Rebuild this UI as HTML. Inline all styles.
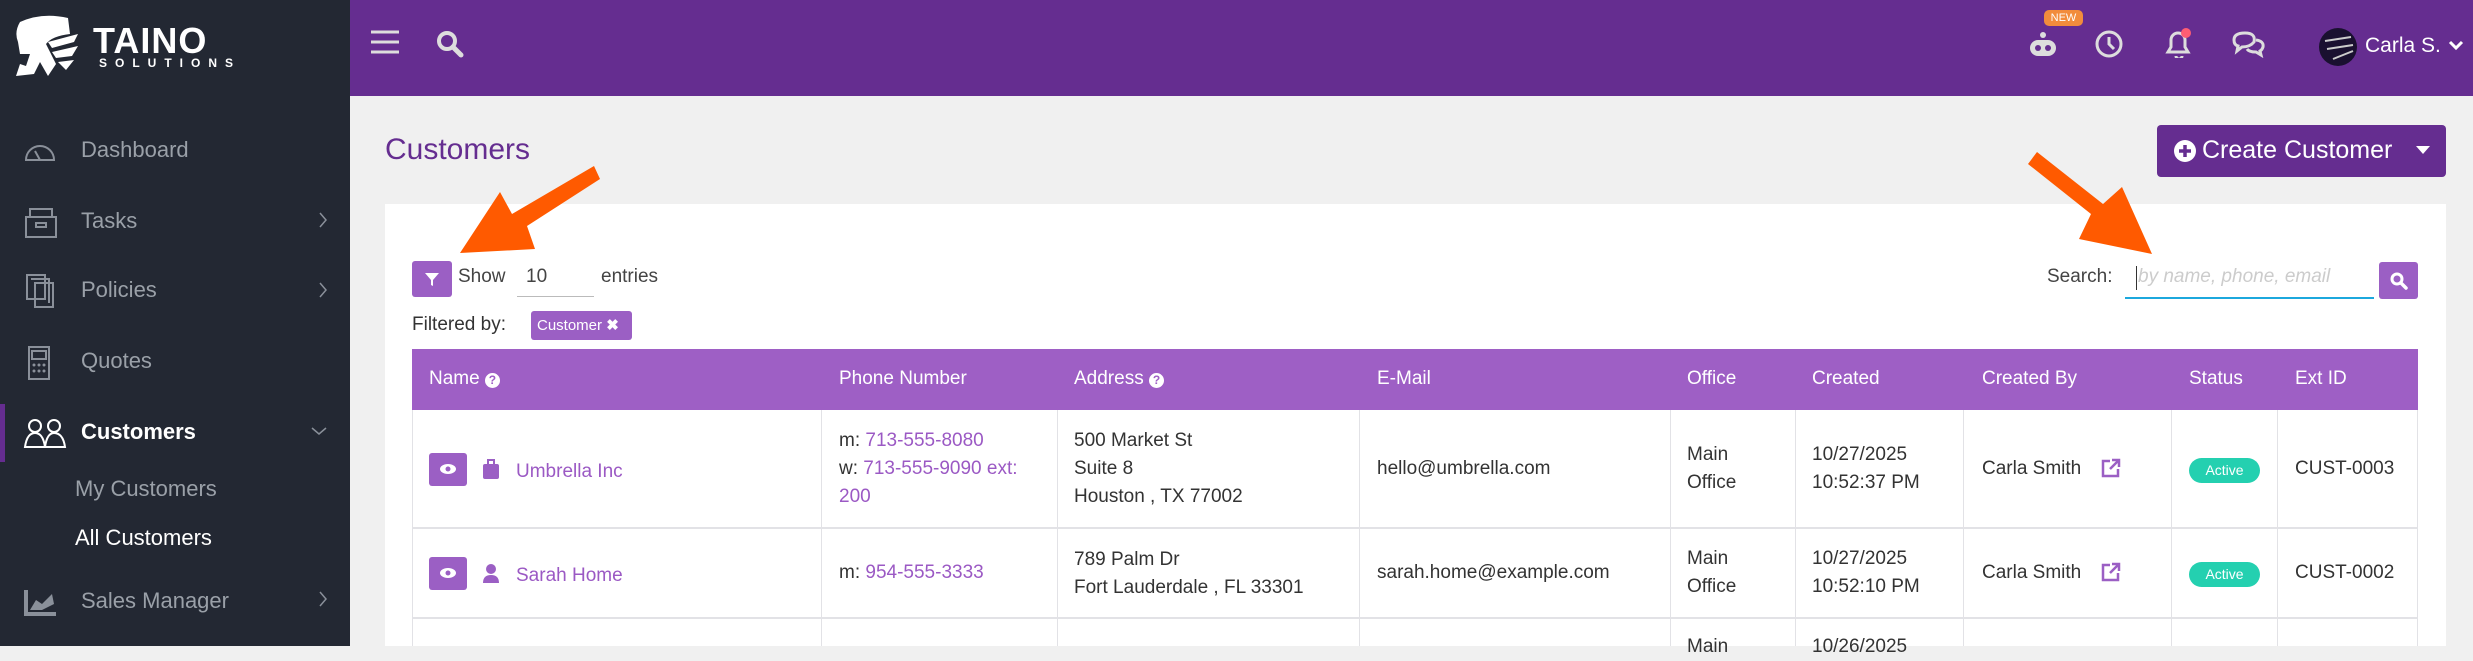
<!DOCTYPE html>
<html><head><meta charset="utf-8"><style>
*{margin:0;padding:0;box-sizing:border-box}
body{width:2473px;height:646px;overflow:hidden;background:#f0f0f0;font-family:"Liberation Sans",sans-serif;position:relative;color:#333}
.a{position:absolute;white-space:nowrap}
#sb{left:0;top:0;width:350px;height:646px;background:#232833}
#tb{left:350px;top:0;width:2123px;height:96px;background:#652d90}
.nav{font-size:22px;color:#9aa0a8;transform:translateY(-50%)}
.ico{stroke:#8a909a;fill:none;stroke-width:2}
.th{color:#fff;font-size:19px;top:379px;transform:translateY(-50%)}
.td{font-size:19px;color:#333;transform:translateY(-50%);line-height:28px}
.lk{color:#9b59c4}
.vl{position:absolute;width:1px;background:#e2e2e6;top:410px;height:236px}
.hl{position:absolute;height:2px;background:#e2e2e6;left:412px;width:2006px}
.vb{position:absolute;width:38px;height:33px;background:#9b5fc4;border-radius:3px}
.act{position:absolute;width:71px;height:25px;border-radius:13px;background:#24d0b0;color:#fff;font-size:14px;text-align:center;line-height:25px}
</style></head><body>
<div class="a" id="sb"></div>
<div class="a" id="tb"></div>
<svg class="a" style="left:12px;top:14px" width="72" height="66" viewBox="0 0 72 66"><path d="M8 8 Q30 -2 56 4 L58 20 Q40 22 34 30 L44 50 L36 62 L28 48 L22 60 L4 62 L8 50 L14 52 L18 40 L8 40 L6 28 Q2 18 8 8Z" fill="#fff"/><path d="M36 28 L66 20 L62 28 L40 34Z M40 38 L66 32 L60 42 L44 44Z M46 48 L62 46 L54 56Z" fill="#fff"/></svg>
<div class="a" style="left:93px;top:20px;font-size:36px;font-weight:bold;color:#fff;letter-spacing:1px">TAINO</div>
<div class="a" style="left:99px;top:56px;font-size:12px;font-weight:bold;color:#fff;letter-spacing:8px">SOLUTIONS</div>
<svg class="a" style="left:24px;top:140px" width="32" height="22"><path class="ico" d="M2 20 A14 14 0 0 1 30 20Z M16 20 L11 11"/></svg>
<div class="a nav" style="left:81px;top:150px">Dashboard</div>
<svg class="a" style="left:24px;top:205px" width="34" height="34"><path class="ico" d="M2 12 L32 12 L32 32 L2 32Z M6 12 L6 4 L28 4 L28 12 M12 18 L22 18 L22 22 L12 22Z"/></svg>
<div class="a nav" style="left:81px;top:221px">Tasks</div>
<svg class="a" style="left:318px;top:211px" width="10" height="18"><path d="M2 2 L8 9 L2 16" stroke="#8a909a" stroke-width="1.5" fill="none"/></svg>
<svg class="a" style="left:25px;top:273px" width="32" height="36"><path class="ico" d="M2 2 L20 2 L20 26 L2 26Z M6 6 L24 6 L24 30 M10 10 L28 10 L28 34 L10 34Z"/></svg>
<div class="a nav" style="left:81px;top:290px">Policies</div>
<svg class="a" style="left:318px;top:281px" width="10" height="18"><path d="M2 2 L8 9 L2 16" stroke="#8a909a" stroke-width="1.5" fill="none"/></svg>
<svg class="a" style="left:26px;top:345px" width="26" height="36"><path class="ico" d="M3 2 L23 2 L23 34 L3 34Z M6 6 L20 6 L20 14 L6 14Z"/><g fill="#8a909a"><circle cx="8" cy="20" r="1.5"/><circle cx="13" cy="20" r="1.5"/><circle cx="18" cy="20" r="1.5"/><circle cx="8" cy="26" r="1.5"/><circle cx="13" cy="26" r="1.5"/><circle cx="18" cy="26" r="1.5"/></g></svg>
<div class="a nav" style="left:81px;top:361px">Quotes</div>
<div class="a" style="left:0;top:404px;width:5px;height:58px;background:#652d90"></div>
<svg class="a" style="left:23px;top:417px" width="44" height="32"><g stroke="#fff" fill="none" stroke-width="2"><circle cx="12" cy="9" r="6"/><circle cx="31" cy="9" r="6"/><path d="M2 30 Q4 16 12 16 Q20 16 22 30Z M22 30 Q24 16 31 16 Q40 16 42 30Z"/></g></svg>
<div class="a nav" style="left:81px;top:432px;color:#fff;font-weight:bold">Customers</div>
<svg class="a" style="left:310px;top:426px" width="18" height="10"><path d="M2 2 L9 8 L16 2" stroke="#8a909a" stroke-width="1.5" fill="none"/></svg>
<div class="a nav" style="left:75px;top:489px">My Customers</div>
<div class="a nav" style="left:75px;top:538px;color:#fff">All Customers</div>
<svg class="a" style="left:24px;top:590px" width="34" height="26"><path d="M2 0 L2 24 L32 24" stroke="#8a909a" stroke-width="4" fill="none"/><path d="M6 20 L12 10 L18 14 L28 4 L30 14 L18 20 Z" fill="#8a909a"/></svg>
<div class="a nav" style="left:81px;top:601px">Sales Manager</div>
<svg class="a" style="left:318px;top:590px" width="10" height="18"><path d="M2 2 L8 9 L2 16" stroke="#8a909a" stroke-width="1.5" fill="none"/></svg>
<svg class="a" style="left:370px;top:30px" width="30" height="24"><path d="M1 2H29M1 12H29M1 22H29" stroke="#ddd" stroke-width="3"/></svg>
<svg class="a" style="left:436px;top:30px" width="28" height="28"><circle cx="11" cy="11" r="8" stroke="#ddd" stroke-width="4" fill="none"/><path d="M17 17 L25 25" stroke="#ddd" stroke-width="5" stroke-linecap="round"/></svg>
<div class="a" style="left:2044px;top:10px;width:39px;height:16px;background:#f28c3c;border-radius:5px;color:#fff;font-size:11px;text-align:center;line-height:16px">NEW</div>
<svg class="a" style="left:2029px;top:32px" width="28" height="24"><circle cx="14" cy="3" r="3" fill="#ddd"/><rect x="1" y="8" width="26" height="16" rx="8" fill="#ddd"/><circle cx="9" cy="16" r="3" fill="#652d90"/><circle cx="19" cy="16" r="3" fill="#652d90"/></svg>
<svg class="a" style="left:2095px;top:30px" width="28" height="28"><circle cx="14" cy="14" r="12" stroke="#ddd" stroke-width="3" fill="none"/><path d="M14 7 V14 L19 19" stroke="#ddd" stroke-width="3" fill="none"/></svg>
<svg class="a" style="left:2162px;top:26px" width="32" height="32"><path d="M14 30 a3 3 0 0 0 6 0 M6 26 H26 L23 21 V14 A7 7 0 0 0 9 14 V21Z" stroke="#ddd" stroke-width="3" fill="none"/><circle cx="24" cy="7" r="5" fill="#ff5d73"/></svg>
<svg class="a" style="left:2232px;top:30px" width="34" height="28"><g stroke="#ddd" stroke-width="3" fill="none"><path d="M13 3 Q2 3 2 10 Q2 15 6 16 L5 21 L10 17 Q18 17 22 12 Q24 3 13 3Z"/><path d="M24 10 Q32 11 31 17 Q30 20 28 21 L29 25 L24 22 Q17 22 15 19"/></g></svg>
<svg class="a" style="left:2317px;top:27px" width="42" height="39"><circle cx="21" cy="20" r="19" fill="#1a1030"/><path d="M8 14 L34 10 M10 22 L36 18 M16 32 L36 24" stroke="#ccc" stroke-width="2"/></svg>
<div class="a" style="left:2365px;top:34px;font-size:21px;color:#fff">Carla S.</div>
<svg class="a" style="left:2448px;top:40px" width="16" height="12"><path d="M2 2 L8 8 L14 2" stroke="#fff" stroke-width="3" fill="none"/></svg>
<div class="a" style="left:385px;top:133px;font-size:30px;color:#652d90">Customers</div>
<div class="a" style="left:2157px;top:125px;width:289px;height:52px;background:#652d90;border-radius:4px"></div>
<svg class="a" style="left:2174px;top:140px" width="22" height="22"><circle cx="11" cy="11" r="11" fill="#fff"/><path d="M11 5V17M5 11H17" stroke="#652d90" stroke-width="3.5"/></svg>
<div class="a" style="left:2202px;top:136px;font-size:25px;color:#fff">Create Customer</div>
<svg class="a" style="left:2415px;top:145px" width="16" height="10"><path d="M1 1 L15 1 L8 9Z" fill="#fff"/></svg>
<div class="a" style="left:385px;top:204px;width:2061px;height:442px;background:#fff"></div>
<div class="a" style="left:412px;top:261px;width:40px;height:36px;background:#9b5fc4;border-radius:3px"></div>
<svg class="a" style="left:424px;top:271px" width="16" height="16"><path d="M1 2 H15 L9 9 V15 L7 14 V9Z" fill="#fff"/></svg>
<div class="a" style="left:458px;top:266px;font-size:19px;color:#444">Show</div>
<div class="a" style="left:526px;top:266px;font-size:19px;color:#444">10</div>
<div class="a" style="left:517px;top:296px;width:77px;height:1px;background:#bbb"></div>
<div class="a" style="left:601px;top:266px;font-size:19px;color:#444">entries</div>
<div class="a" style="left:412px;top:314px;font-size:19px;color:#333">Filtered by:</div>
<div class="a" style="left:531px;top:311px;width:101px;height:29px;background:#9b5fc4;border-radius:3px;color:#fff;font-size:15px;line-height:29px;padding-left:6px">Customer <b>✖</b></div>
<div class="a" style="left:2047px;top:266px;font-size:19px;color:#444">Search:</div>
<div class="a" style="left:2136px;top:266px;width:1px;height:24px;background:#333"></div>
<div class="a" style="left:2138px;top:266px;font-size:19px;color:#ccc;font-style:italic;width:232px;overflow:hidden">by name, phone, email</div>
<div class="a" style="left:2125px;top:297px;width:249px;height:2px;background:#1ca8dd"></div>
<div class="a" style="left:2379px;top:262px;width:39px;height:37px;background:#9b5fc4;border-radius:3px"></div>
<svg class="a" style="left:2390px;top:272px" width="18" height="18"><circle cx="7" cy="7" r="5" stroke="#fff" stroke-width="3" fill="none"/><path d="M11 11 L16 16" stroke="#fff" stroke-width="3.5" stroke-linecap="round"/></svg>
<div class="a" style="left:412px;top:349px;width:2006px;height:61px;background:#9e5fc5"></div>
<div class="a th" style="left:429px">Name <span style="display:inline-block;width:15px;height:15px;border-radius:50%;background:#fff;color:#9e5fc5;font-size:12px;text-align:center;line-height:15px;font-weight:bold">?</span></div>
<div class="a th" style="left:839px">Phone Number</div>
<div class="a th" style="left:1074px">Address <span style="display:inline-block;width:15px;height:15px;border-radius:50%;background:#fff;color:#9e5fc5;font-size:12px;text-align:center;line-height:15px;font-weight:bold">?</span></div>
<div class="a th" style="left:1377px">E-Mail</div>
<div class="a th" style="left:1687px">Office</div>
<div class="a th" style="left:1812px">Created</div>
<div class="a th" style="left:1982px">Created By</div>
<div class="a th" style="left:2189px">Status</div>
<div class="a th" style="left:2295px">Ext ID</div>
<div class="vl" style="left:412px"></div><div class="vl" style="left:821px"></div><div class="vl" style="left:1057px"></div><div class="vl" style="left:1359px"></div><div class="vl" style="left:1670px"></div><div class="vl" style="left:1795px"></div><div class="vl" style="left:1963px"></div><div class="vl" style="left:2171px"></div><div class="vl" style="left:2277px"></div><div class="vl" style="left:2417px"></div>
<div class="hl" style="top:527px"></div><div class="hl" style="top:617px"></div>
<div class="vb" style="left:429px;top:453px"></div>
<svg class="a" style="left:439px;top:463px" width="18" height="12"><ellipse cx="9" cy="6" rx="8" ry="5" fill="#fff"/><circle cx="9" cy="6" r="2.5" fill="#9b5fc4"/></svg>
<svg class="a" style="left:482px;top:459px" width="18" height="22"><path d="M6 5 V1 H12 V5" stroke="#9b5fc4" stroke-width="2" fill="none"/><rect x="1" y="5" width="16" height="15" rx="2" fill="#9b5fc4"/></svg>
<div class="a td lk" style="left:516px;top:472px">Umbrella Inc</div>
<div class="a td" style="left:839px;top:469px">m: <span class="lk">713-555-8080</span><br>w: <span class="lk">713-555-9090 ext:</span><br><span class="lk">200</span></div>
<div class="a td" style="left:1074px;top:469px">500 Market St<br>Suite 8<br>Houston , TX 77002</div>
<div class="a td" style="left:1377px;top:469px">hello@umbrella.com</div>
<div class="a td" style="left:1687px;top:469px">Main<br>Office</div>
<div class="a td" style="left:1812px;top:469px">10/27/2025<br>10:52:37 PM</div>
<div class="a td" style="left:1982px;top:469px">Carla Smith</div>
<svg class="a" style="left:2101px;top:458px" width="20" height="20"><path d="M9 3 H2 V18 H17 V11 M11 2 H18 V9 M18 2 L9 11" stroke="#9b5fc4" stroke-width="2.5" fill="none"/></svg>
<div class="act" style="left:2189px;top:458px">Active</div>
<div class="a td" style="left:2295px;top:469px">CUST-0003</div>
<div class="vb" style="left:429px;top:557px"></div>
<svg class="a" style="left:439px;top:567px" width="18" height="12"><ellipse cx="9" cy="6" rx="8" ry="5" fill="#fff"/><circle cx="9" cy="6" r="2.5" fill="#9b5fc4"/></svg>
<svg class="a" style="left:482px;top:563px" width="18" height="22"><circle cx="9" cy="6" r="5" fill="#9b5fc4"/><path d="M1 20 Q1 12 9 12 Q17 12 17 20Z" fill="#9b5fc4"/></svg>
<div class="a td lk" style="left:516px;top:576px">Sarah Home</div>
<div class="a td" style="left:839px;top:573px">m: <span class="lk">954-555-3333</span></div>
<div class="a td" style="left:1074px;top:574px">789 Palm Dr<br>Fort Lauderdale , FL 33301</div>
<div class="a td" style="left:1377px;top:573px">sarah.home@example.com</div>
<div class="a td" style="left:1687px;top:573px">Main<br>Office</div>
<div class="a td" style="left:1812px;top:573px">10/27/2025<br>10:52:10 PM</div>
<div class="a td" style="left:1982px;top:573px">Carla Smith</div>
<svg class="a" style="left:2101px;top:562px" width="20" height="20"><path d="M9 3 H2 V18 H17 V11 M11 2 H18 V9 M18 2 L9 11" stroke="#9b5fc4" stroke-width="2.5" fill="none"/></svg>
<div class="act" style="left:2189px;top:562px">Active</div>
<div class="a td" style="left:2295px;top:573px">CUST-0002</div>
<div class="a td" style="left:1687px;top:633px;transform:none">Main</div>
<div class="a td" style="left:1812px;top:633px;transform:none">10/26/2025</div>
<svg class="a" style="left:0;top:0" width="2473" height="646"><g fill="#ff5a00"><polygon points="594,166 600,179 527,226 535,249 460,253 500,192 512,214"/><polygon points="2037,152 2028,164 2091,214 2079,239 2152,254 2122,187 2103,204"/></g></svg>
</body></html>
